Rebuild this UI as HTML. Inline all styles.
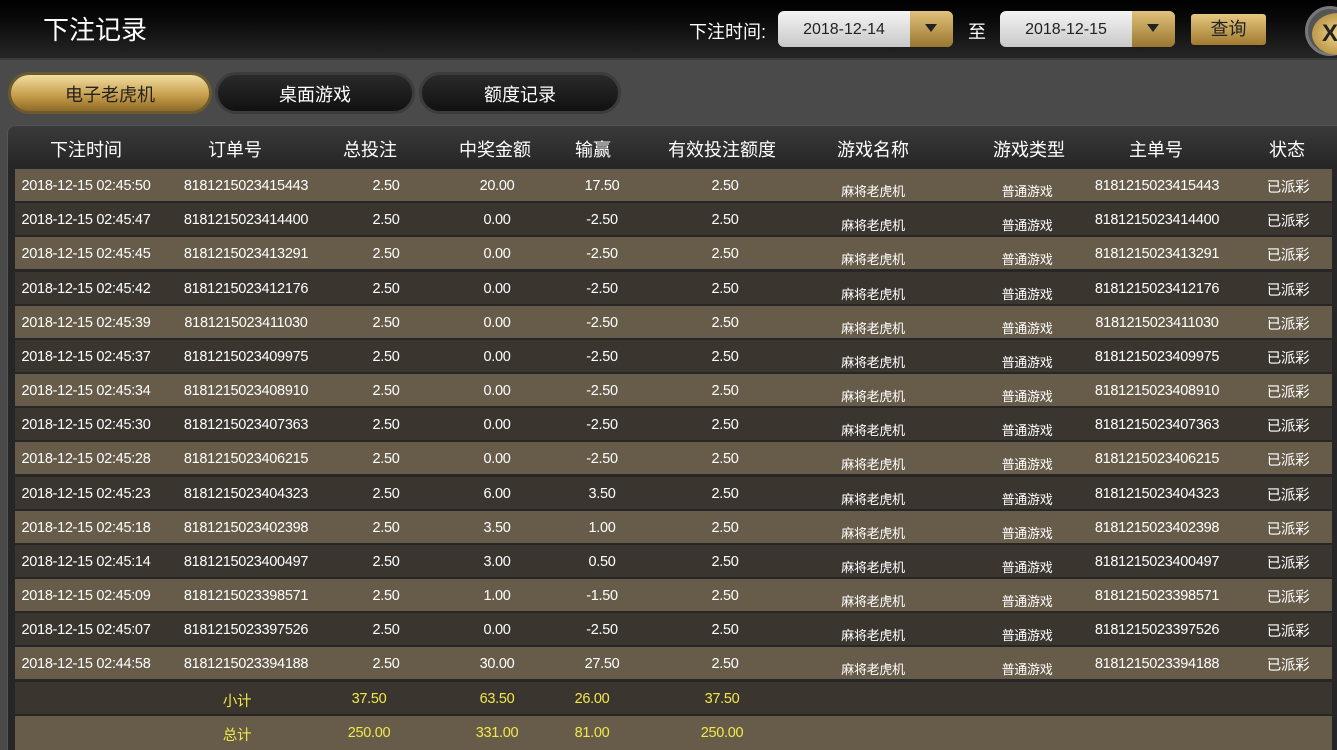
<!DOCTYPE html>
<html><head><meta charset="utf-8"><style>
*{margin:0;padding:0;box-sizing:border-box}
html,body{width:1337px;height:750px;overflow:hidden}
body{background:#4a4a4a;font-family:"Liberation Sans","Noto Sans CJK SC",sans-serif;color:#fff;position:relative}
.top{position:absolute;left:0;top:0;width:1337px;height:60px;background:linear-gradient(#000 0,#0a0a0a 20px,#262626 58px);border-bottom:2px solid #3a3a3a}
.title{position:absolute;left:43px;top:10px;font-size:26px;color:#fff}
.lbl{position:absolute;top:18px;font-size:18px}
.date{position:absolute;top:11px;width:175px;height:36px;border-radius:6px;background:linear-gradient(#f4f4f4,#c8c8c8);overflow:hidden}
.date span{position:absolute;left:0;width:132px;top:10px;text-align:center;color:#222;font-size:16px}
.date i{position:absolute;right:0;top:0;width:43px;height:36px;background:linear-gradient(#e0c27a,#9a7630)}
.date i:after{content:"";position:absolute;left:15px;top:13px;border-left:6px solid transparent;border-right:6px solid transparent;border-top:8px solid #222}
.btn{position:absolute;left:1191px;top:14px;width:75px;height:31px;border-radius:3px;background:linear-gradient(#e6c77e,#a07a30);color:#222;font-size:18px;text-align:center;line-height:31px}
.x{position:absolute;left:1305px;top:6px;width:50px;height:50px;border-radius:50%;background:#555;border:3px solid #777}
.x:after{content:"X";position:absolute;left:4px;top:4px;width:42px;height:42px;border-radius:50%;background:radial-gradient(#f0d48a,#a88030);color:#222;font-weight:bold;font-size:24px;line-height:42px;padding-left:10px}
.tab{position:absolute;top:72px;height:42px;border-radius:21px;font-size:18px;text-align:center;line-height:40px;border:3px solid #3c3c3c;background:linear-gradient(#2a2a2a,#111);color:#fff}
.tab.on{background:linear-gradient(#f2dea0,#c39a48 60%,#8e6a25);color:#222;border-color:#6a5a30}
.panel{position:absolute;left:7px;top:125px;width:1340px;height:640px;border-radius:8px;background:linear-gradient(#3a3a3a,#262626 40px,#262626);border:1px solid #555}
.r{position:absolute;left:15px;width:1317px;height:32px;font-size:14.5px;letter-spacing:-0.3px}
.r.l{background:#675c4a}.r.d{background:#3b3530}
.r span{position:absolute;top:9px;transform:translateX(-50%);white-space:nowrap}
.r .g{top:12px;font-size:13px}
.r .s{top:7px}
.h{position:absolute;top:136px;font-size:18px;transform:translateX(-50%);white-space:nowrap}
.y span{color:#f2e84a;top:9px}
</style></head><body>
<div class="top"></div>
<div class="title">下注记录</div>
<div class="lbl" style="left:689px">下注时间:</div>
<div class="date" style="left:778px"><span>2018-12-14</span><i></i></div>
<div class="lbl" style="left:968px">至</div>
<div class="date" style="left:1000px"><span>2018-12-15</span><i></i></div>
<div class="btn">查询</div>
<div class="x"></div>
<div class="tab on" style="left:8px;width:204px">电子老虎机</div>
<div class="tab" style="left:215px;width:200px">桌面游戏</div>
<div class="tab" style="left:419px;width:202px">额度记录</div>
<div class="panel"></div>
<div class="h" style="left:86px">下注时间</div><div class="h" style="left:235px">订单号</div><div class="h" style="left:370px">总投注</div><div class="h" style="left:495px">中奖金额</div><div class="h" style="left:593px">输赢</div><div class="h" style="left:722px">有效投注额度</div><div class="h" style="left:873px">游戏名称</div><div class="h" style="left:1029px">游戏类型</div><div class="h" style="left:1156px">主单号</div><div class="h" style="left:1287px">状态</div>

<div class="r l" style="top:169px"><span style="left:71px">2018-12-15 02:45:50</span><span style="left:231px">8181215023415443</span><span style="left:371px">2.50</span><span style="left:482px">20.00</span><span style="left:587px">17.50</span><span style="left:710px">2.50</span><span class="g" style="left:858px">麻将老虎机</span><span class="g" style="left:1012px">普通游戏</span><span style="left:1142px">8181215023415443</span><span class="s" style="left:1273px">已派彩</span></div>
<div class="r d" style="top:203px"><span style="left:71px">2018-12-15 02:45:47</span><span style="left:231px">8181215023414400</span><span style="left:371px">2.50</span><span style="left:482px">0.00</span><span style="left:587px">-2.50</span><span style="left:710px">2.50</span><span class="g" style="left:858px">麻将老虎机</span><span class="g" style="left:1012px">普通游戏</span><span style="left:1142px">8181215023414400</span><span class="s" style="left:1273px">已派彩</span></div>
<div class="r l" style="top:237px"><span style="left:71px">2018-12-15 02:45:45</span><span style="left:231px">8181215023413291</span><span style="left:371px">2.50</span><span style="left:482px">0.00</span><span style="left:587px">-2.50</span><span style="left:710px">2.50</span><span class="g" style="left:858px">麻将老虎机</span><span class="g" style="left:1012px">普通游戏</span><span style="left:1142px">8181215023413291</span><span class="s" style="left:1273px">已派彩</span></div>
<div class="r d" style="top:272px"><span style="left:71px">2018-12-15 02:45:42</span><span style="left:231px">8181215023412176</span><span style="left:371px">2.50</span><span style="left:482px">0.00</span><span style="left:587px">-2.50</span><span style="left:710px">2.50</span><span class="g" style="left:858px">麻将老虎机</span><span class="g" style="left:1012px">普通游戏</span><span style="left:1142px">8181215023412176</span><span class="s" style="left:1273px">已派彩</span></div>
<div class="r l" style="top:306px"><span style="left:71px">2018-12-15 02:45:39</span><span style="left:231px">8181215023411030</span><span style="left:371px">2.50</span><span style="left:482px">0.00</span><span style="left:587px">-2.50</span><span style="left:710px">2.50</span><span class="g" style="left:858px">麻将老虎机</span><span class="g" style="left:1012px">普通游戏</span><span style="left:1142px">8181215023411030</span><span class="s" style="left:1273px">已派彩</span></div>
<div class="r d" style="top:340px"><span style="left:71px">2018-12-15 02:45:37</span><span style="left:231px">8181215023409975</span><span style="left:371px">2.50</span><span style="left:482px">0.00</span><span style="left:587px">-2.50</span><span style="left:710px">2.50</span><span class="g" style="left:858px">麻将老虎机</span><span class="g" style="left:1012px">普通游戏</span><span style="left:1142px">8181215023409975</span><span class="s" style="left:1273px">已派彩</span></div>
<div class="r l" style="top:374px"><span style="left:71px">2018-12-15 02:45:34</span><span style="left:231px">8181215023408910</span><span style="left:371px">2.50</span><span style="left:482px">0.00</span><span style="left:587px">-2.50</span><span style="left:710px">2.50</span><span class="g" style="left:858px">麻将老虎机</span><span class="g" style="left:1012px">普通游戏</span><span style="left:1142px">8181215023408910</span><span class="s" style="left:1273px">已派彩</span></div>
<div class="r d" style="top:408px"><span style="left:71px">2018-12-15 02:45:30</span><span style="left:231px">8181215023407363</span><span style="left:371px">2.50</span><span style="left:482px">0.00</span><span style="left:587px">-2.50</span><span style="left:710px">2.50</span><span class="g" style="left:858px">麻将老虎机</span><span class="g" style="left:1012px">普通游戏</span><span style="left:1142px">8181215023407363</span><span class="s" style="left:1273px">已派彩</span></div>
<div class="r l" style="top:442px"><span style="left:71px">2018-12-15 02:45:28</span><span style="left:231px">8181215023406215</span><span style="left:371px">2.50</span><span style="left:482px">0.00</span><span style="left:587px">-2.50</span><span style="left:710px">2.50</span><span class="g" style="left:858px">麻将老虎机</span><span class="g" style="left:1012px">普通游戏</span><span style="left:1142px">8181215023406215</span><span class="s" style="left:1273px">已派彩</span></div>
<div class="r d" style="top:477px"><span style="left:71px">2018-12-15 02:45:23</span><span style="left:231px">8181215023404323</span><span style="left:371px">2.50</span><span style="left:482px">6.00</span><span style="left:587px">3.50</span><span style="left:710px">2.50</span><span class="g" style="left:858px">麻将老虎机</span><span class="g" style="left:1012px">普通游戏</span><span style="left:1142px">8181215023404323</span><span class="s" style="left:1273px">已派彩</span></div>
<div class="r l" style="top:511px"><span style="left:71px">2018-12-15 02:45:18</span><span style="left:231px">8181215023402398</span><span style="left:371px">2.50</span><span style="left:482px">3.50</span><span style="left:587px">1.00</span><span style="left:710px">2.50</span><span class="g" style="left:858px">麻将老虎机</span><span class="g" style="left:1012px">普通游戏</span><span style="left:1142px">8181215023402398</span><span class="s" style="left:1273px">已派彩</span></div>
<div class="r d" style="top:545px"><span style="left:71px">2018-12-15 02:45:14</span><span style="left:231px">8181215023400497</span><span style="left:371px">2.50</span><span style="left:482px">3.00</span><span style="left:587px">0.50</span><span style="left:710px">2.50</span><span class="g" style="left:858px">麻将老虎机</span><span class="g" style="left:1012px">普通游戏</span><span style="left:1142px">8181215023400497</span><span class="s" style="left:1273px">已派彩</span></div>
<div class="r l" style="top:579px"><span style="left:71px">2018-12-15 02:45:09</span><span style="left:231px">8181215023398571</span><span style="left:371px">2.50</span><span style="left:482px">1.00</span><span style="left:587px">-1.50</span><span style="left:710px">2.50</span><span class="g" style="left:858px">麻将老虎机</span><span class="g" style="left:1012px">普通游戏</span><span style="left:1142px">8181215023398571</span><span class="s" style="left:1273px">已派彩</span></div>
<div class="r d" style="top:613px"><span style="left:71px">2018-12-15 02:45:07</span><span style="left:231px">8181215023397526</span><span style="left:371px">2.50</span><span style="left:482px">0.00</span><span style="left:587px">-2.50</span><span style="left:710px">2.50</span><span class="g" style="left:858px">麻将老虎机</span><span class="g" style="left:1012px">普通游戏</span><span style="left:1142px">8181215023397526</span><span class="s" style="left:1273px">已派彩</span></div>
<div class="r l" style="top:647px"><span style="left:71px">2018-12-15 02:44:58</span><span style="left:231px">8181215023394188</span><span style="left:371px">2.50</span><span style="left:482px">30.00</span><span style="left:587px">27.50</span><span style="left:710px">2.50</span><span class="g" style="left:858px">麻将老虎机</span><span class="g" style="left:1012px">普通游戏</span><span style="left:1142px">8181215023394188</span><span class="s" style="left:1273px">已派彩</span></div>
<div class="r d y" style="top:682px"><span style="left:222px;top:8px">小计</span><span style="left:354px">37.50</span><span style="left:482px">63.50</span><span style="left:577px">26.00</span><span style="left:707px">37.50</span></div>
<div class="r l y" style="top:716px;height:34px"><span style="left:222px;top:8px">总计</span><span style="left:354px">250.00</span><span style="left:482px">331.00</span><span style="left:577px">81.00</span><span style="left:707px">250.00</span></div>
</body></html>
